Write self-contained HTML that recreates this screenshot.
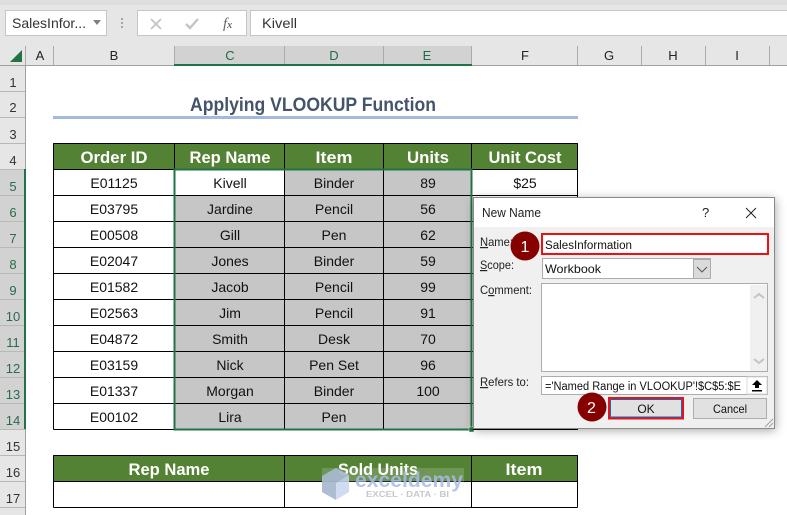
<!DOCTYPE html>
<html><head><meta charset="utf-8"><style>
html,body{margin:0;padding:0;background:#fff;width:787px;height:515px;overflow:hidden}
svg{display:block}
text{font-family:"Liberation Sans",sans-serif}
.c{font-size:14px;fill:#111;text-anchor:middle}
.h{font-size:17px;font-weight:bold;fill:#fff;text-anchor:middle}
.ch{font-size:13px;fill:#222;text-anchor:middle}
.chs{font-size:13px;fill:#1f6b45;text-anchor:middle}
.rn{font-size:13px;fill:#333;text-anchor:middle}
.rns{font-size:13px;fill:#2a6b4a;text-anchor:middle}
.d{font-size:12px;fill:#222}
</style></head><body>
<svg width="787" height="515" viewBox="0 0 787 515" xmlns="http://www.w3.org/2000/svg">
<defs><filter id="sh" x="-15%" y="-15%" width="130%" height="130%"><feDropShadow dx="1" dy="2" stdDeviation="5" flood-color="#000" flood-opacity=".35"/></filter></defs>
<rect width="787" height="515" fill="#fff"/>
<!-- ribbon -->
<rect width="787" height="66" fill="#e6e6e6"/>
<rect width="787" height="5" fill="#dedede"/>
<rect x="5.500" y="10.500" width="101" height="25" fill="#fff" stroke="#c6c6c6"/>
<text x="12" y="28" font-size="14" fill="#333" textLength="74" lengthAdjust="spacingAndGlyphs">SalesInfor...</text>
<path d="M93 20h8l-4 5z" fill="#808080"/>
<rect x="121" y="18" width="2" height="2" fill="#a6a6a6"/><rect x="121" y="22" width="2" height="2" fill="#a6a6a6"/><rect x="121" y="26" width="2" height="2" fill="#a6a6a6"/>
<rect x="137.500" y="10.500" width="109" height="25" fill="#fff" stroke="#c6c6c6"/>
<path d="M151 19l10 10M161 19l-10 10" stroke="#c4c4c4" stroke-width="1.800" fill="none"/>
<path d="M186 24l4 4 8-9" stroke="#c4c4c4" stroke-width="2.400" fill="none"/>
<text x="223" y="28" style="font-family:'Liberation Serif',serif" font-style="italic" font-size="15" fill="#666">f<tspan font-size="10" font-weight="bold">x</tspan></text>
<rect x="250.500" y="10.500" width="540" height="25" fill="#fff" stroke="#c6c6c6"/>
<text x="262" y="28" font-size="14" fill="#333" textLength="35" lengthAdjust="spacingAndGlyphs">Kivell</text>
<!-- column headers -->
<rect x="174" y="46" width="297" height="20" fill="#d2d2d2"/>
<path d="M25.500 46v20M53.500 46v19M174.500 46v19M284.500 46v19M383.500 46v19M471.500 46v19M577.500 46v19M641.500 46v19M705.500 46v19M769.500 46v19" stroke="#ababab"/>
<rect x="0" y="65" width="787" height="1" fill="#a0a0a0"/>
<rect x="174" y="64" width="298" height="2" fill="#217346"/>
<path d="M22 50v12H10z" fill="#217346"/>
<text class="ch" x="40" y="60">A</text><text class="ch" x="114" y="60">B</text>
<text class="chs" x="230" y="60">C</text><text class="chs" x="334" y="60">D</text><text class="chs" x="427" y="60">E</text>
<text class="ch" x="525" y="60">F</text><text class="ch" x="609" y="60">G</text><text class="ch" x="673" y="60">H</text><text class="ch" x="737" y="60">I</text>
<!-- row headers -->
<rect x="0" y="66" width="26" height="449" fill="#e6e6e6"/>
<rect x="0" y="169" width="26" height="260" fill="#d2d2d2"/>
<path d="M0 91.500h26M0 117.500h26M0 143.500h26M0 169.500h26M0 195.500h26M0 221.500h26M0 247.500h26M0 273.500h26M0 299.500h26M0 325.500h26M0 351.500h26M0 377.500h26M0 403.500h26M0 429.500h26M0 455.500h26M0 481.500h26M0 507.500h26" stroke="#b8b8b8"/>
<rect x="25" y="66" width="1" height="449" fill="#a0a0a0"/>
<rect x="24" y="169" width="2" height="260" fill="#217346"/>
<text class="rn" x="13" y="87">1</text><text class="rn" x="13" y="112">2</text><text class="rn" x="13" y="139">3</text><text class="rn" x="13" y="165">4</text>
<text class="rns" x="13" y="191">5</text><text class="rns" x="13" y="217">6</text><text class="rns" x="13" y="243">7</text><text class="rns" x="13" y="269">8</text><text class="rns" x="13" y="295">9</text><text class="rns" x="13" y="321">10</text><text class="rns" x="13" y="347">11</text><text class="rns" x="13" y="373">12</text><text class="rns" x="13" y="399">13</text><text class="rns" x="13" y="425">14</text>
<text class="rn" x="13" y="451">15</text><text class="rn" x="13" y="477">16</text><text class="rn" x="13" y="503">17</text>
<!-- title -->
<text x="190" y="111" font-size="19" font-weight="bold" fill="#44546a" textLength="246" lengthAdjust="spacingAndGlyphs">Applying VLOOKUP Function</text>
<rect x="53" y="116" width="525" height="3" fill="#a4b9e0"/>
<!-- table 1 -->
<rect x="53" y="143" width="525" height="27" fill="#548235"/>
<rect x="174" y="169" width="298" height="260" fill="#c6c6c6"/>
<rect x="174" y="169" width="110" height="26" fill="#fff"/>
<path d="M53.500 143.500H577.500M53.500 169.500H577.500M53.500 195.500H577.500M53.500 221.500H577.500M53.500 247.500H577.500M53.500 273.500H577.500M53.500 299.500H577.500M53.500 325.500H577.500M53.500 351.500H577.500M53.500 377.500H577.500M53.500 403.500H577.500M53.500 429.500H577.500M53.500 143.500V429.500M174.500 143.500V429.500M284.500 143.500V429.500M383.500 143.500V429.500M471.500 143.500V429.500M577.500 143.500V429.500" stroke="#000" fill="none"/>
<text class="h" x="114" y="163" textLength="67" lengthAdjust="spacingAndGlyphs">Order ID</text>
<text class="h" x="230" y="163" textLength="81" lengthAdjust="spacingAndGlyphs">Rep Name</text>
<text class="h" x="334" y="163" textLength="37" lengthAdjust="spacingAndGlyphs">Item</text>
<text class="h" x="428" y="163" textLength="42" lengthAdjust="spacingAndGlyphs">Units</text>
<text class="h" x="525" y="163" textLength="73" lengthAdjust="spacingAndGlyphs">Unit Cost</text>
<text class="c" x="114" y="188">E01125</text><text class="c" x="230" y="188">Kivell</text><text class="c" x="334" y="188">Binder</text><text class="c" x="428" y="188">89</text><text class="c" x="525" y="188">$25</text>
<text class="c" x="114" y="214">E03795</text><text class="c" x="230" y="214">Jardine</text><text class="c" x="334" y="214">Pencil</text><text class="c" x="428" y="214">56</text>
<text class="c" x="114" y="240">E00508</text><text class="c" x="230" y="240">Gill</text><text class="c" x="334" y="240">Pen</text><text class="c" x="428" y="240">62</text>
<text class="c" x="114" y="266">E02047</text><text class="c" x="230" y="266">Jones</text><text class="c" x="334" y="266">Binder</text><text class="c" x="428" y="266">59</text>
<text class="c" x="114" y="292">E01582</text><text class="c" x="230" y="292">Jacob</text><text class="c" x="334" y="292">Pencil</text><text class="c" x="428" y="292">99</text>
<text class="c" x="114" y="318">E02563</text><text class="c" x="230" y="318">Jim</text><text class="c" x="334" y="318">Pencil</text><text class="c" x="428" y="318">91</text>
<text class="c" x="114" y="344">E04872</text><text class="c" x="230" y="344">Smith</text><text class="c" x="334" y="344">Desk</text><text class="c" x="428" y="344">70</text>
<text class="c" x="114" y="370">E03159</text><text class="c" x="230" y="370">Nick</text><text class="c" x="334" y="370">Pen Set</text><text class="c" x="428" y="370">96</text>
<text class="c" x="114" y="396">E01337</text><text class="c" x="230" y="396">Morgan</text><text class="c" x="334" y="396">Binder</text><text class="c" x="428" y="396">100</text>
<text class="c" x="114" y="422">E00102</text><text class="c" x="230" y="422">Lira</text><text class="c" x="334" y="422">Pen</text>
<rect x="174.500" y="169.500" width="297" height="260" fill="none" stroke="#217346" stroke-width="2"/>
<rect x="469" y="427" width="5" height="5" fill="#217346" stroke="#fff" stroke-width=".5"/>
<!-- table 2 -->
<rect x="53" y="455" width="525" height="27" fill="#548235"/>
<path d="M53.500 455.500H577.500M53.500 481.500H577.500M53.500 507.500H577.500M53.500 455.500V507.500M284.500 455.500V507.500M471.500 455.500V507.500M577.500 455.500V507.500" stroke="#000" fill="none"/>
<text class="h" x="169" y="475" textLength="81" lengthAdjust="spacingAndGlyphs">Rep Name</text>
<text class="h" x="378" y="475" textLength="80" lengthAdjust="spacingAndGlyphs">Sold Units</text>
<text class="h" x="524" y="475" textLength="37" lengthAdjust="spacingAndGlyphs">Item</text>
<!-- watermark -->
<rect x="322" y="468" width="142" height="14" fill="#fff" opacity=".16"/>
<path d="M322 476l14-8 13 7v17l-13 8-14-8z" fill="#c9d6f0" opacity=".85"/>
<path d="M322 476l14 7v17l-14-8zM336 468l13 7-13 8-14-7z" fill="#8fa6b8" opacity=".55"/>
<text x="355" y="487" font-size="21" font-weight="bold" fill="#a9bbe6" opacity=".85" textLength="108" lengthAdjust="spacingAndGlyphs">exceldemy</text>
<text x="366" y="497" font-size="8" font-weight="bold" fill="#c8c8c8" textLength="83" lengthAdjust="spacingAndGlyphs">EXCEL · DATA · BI</text>
<!-- dialog -->
<rect x="473" y="197" width="301.500" height="231.500" fill="#f0f0f0" filter="url(#sh)"/>
<rect x="473" y="197" width="301.500" height="30" fill="#fff"/>
<rect x="473.500" y="197.500" width="301" height="231" fill="none" stroke="#8a8a8a"/>
<text x="482" y="217" font-size="12.500" fill="#222" textLength="59" lengthAdjust="spacingAndGlyphs">New Name</text>
<text x="702" y="217" font-size="13" fill="#222">?</text>
<path d="M746 208l10 10M756 208l-10 10" stroke="#222" stroke-width="1" fill="none"/>
<text class="d" x="480" y="246" textLength="33" lengthAdjust="spacingAndGlyphs"><tspan text-decoration="underline">N</tspan>ame:</text>
<text class="d" x="480" y="269" textLength="34" lengthAdjust="spacingAndGlyphs"><tspan text-decoration="underline">S</tspan>cope:</text>
<text class="d" x="480" y="294" textLength="52" lengthAdjust="spacingAndGlyphs">C<tspan text-decoration="underline">o</tspan>mment:</text>
<text class="d" x="480" y="386" textLength="49" lengthAdjust="spacingAndGlyphs"><tspan text-decoration="underline">R</tspan>efers to:</text>
<rect x="542" y="234" width="226" height="20" fill="#fff" stroke="#ee1111" stroke-width="2"/>
<text x="545" y="249" font-size="11.500" fill="#111" textLength="87" lengthAdjust="spacingAndGlyphs">SalesInformation</text>
<rect x="542.500" y="258.500" width="168" height="20" fill="#fff" stroke="#acacac"/>
<rect x="693.500" y="259.500" width="17" height="19" fill="#dadada" stroke="#acacac"/>
<path d="M697 267l5 5 5-5" stroke="#555" fill="none"/>
<text x="545" y="273" font-size="12" fill="#111" textLength="56" lengthAdjust="spacingAndGlyphs">Workbook</text>
<rect x="541.500" y="283.500" width="226" height="88" fill="#fff" stroke="#acacac"/>
<rect x="750" y="285" width="17" height="86" fill="#f0f0f0"/>
<path d="M754 298l5-4 5 4" stroke="#c4c4c4" stroke-width="2" fill="none"/>
<path d="M754 359l5 4 5-4" stroke="#c4c4c4" stroke-width="2" fill="none"/>
<rect x="541.500" y="376.500" width="226" height="18" fill="#fff" stroke="#acacac"/>
<text x="545" y="390" font-size="11.500" fill="#111" textLength="196" lengthAdjust="spacingAndGlyphs">='Named Range in VLOOKUP'!$C$5:$E</text>
<rect x="747" y="377" width="20" height="17" fill="#fff" stroke="#d8d8d8"/>
<path d="M757 380l5 5h-3v3h-4v-3h-3zM752 390h10v1.500h-10z" fill="#000"/>
<rect x="609" y="398" width="74" height="20.500" fill="#e1e1e1" stroke="#ee1111" stroke-width="2"/>
<rect x="610.500" y="399.500" width="71" height="17.500" fill="none" stroke="#0a6cc4"/>
<text x="646" y="413" font-size="12" fill="#111" text-anchor="middle">OK</text>
<rect x="693.500" y="398.500" width="73" height="20" fill="#e1e1e1" stroke="#adadad"/>
<text x="730" y="413" font-size="12" fill="#111" text-anchor="middle" textLength="34" lengthAdjust="spacingAndGlyphs">Cancel</text>
<path d="M765 427l8-8M769 427l4-4" stroke="#a0a0a0" fill="none"/>
<rect x="473" y="429" width="105" height="1" fill="#000"/>
<circle cx="525" cy="246" r="14.500" fill="#860000"/>
<text x="525" y="252" font-size="16" fill="#fff" text-anchor="middle">1</text>
<circle cx="592" cy="407" r="14.500" fill="#860000"/>
<text x="591.500" y="413" font-size="16" fill="#fff" text-anchor="middle">2</text>
</svg>
</body></html>
